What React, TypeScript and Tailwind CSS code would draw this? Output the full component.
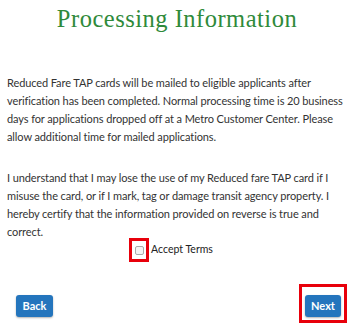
const App = () => {
  return (
    <div className="w-[350px] h-[325px] bg-white flex flex-col font-['Lato',sans-serif] text-[#333]">
      <h1 className="mt-[4px] text-center text-[24.5px] leading-[30px] text-[#2f8a3a] font-['Liberation_Serif',serif] tracking-[0.5px] pl-[4px]">
        Processing Information
      </h1>
      <p className="mt-[40px] pl-[7px] pr-[3px] text-[11px] leading-[18px] tracking-[-0.1px]">
        Reduced Fare TAP cards will be mailed to eligible applicants after
        verification has been completed. Normal processing time is 20 business
        days for applications dropped off at a Metro Customer Center. Please
        allow additional time for mailed applications.
      </p>
      <p className="mt-[23px] pl-[7px] pr-[3px] text-[11px] leading-[18px] tracking-[-0.1px]">
        I understand that I may lose the use of my Reduced fare TAP card if I
        misuse the card, or if I mark, tag or damage transit agency property. I
        hereby certify that the information provided on reverse is true and
        correct.
      </p>
      <div className="mt-[-3px] flex justify-center items-center pr-[8px]">
        <div className="border-[3px] border-[#e8000b] w-[20px] h-[24px] flex items-center justify-center">
          <div className="w-[9px] h-[9px] rounded-[2px] border border-[#aaa] bg-[#f4f4f4]" />
        </div>
        <span className="ml-[2px] text-[10.5px] text-[#222]">Accept Terms</span>
      </div>
      <div className="mt-[22px] flex justify-between items-end pl-[16px] pr-[3px]">
        <button className="mb-[6px] w-[37px] h-[22px] rounded-[3px] bg-[#2475bd] text-white text-[11px] font-bold shadow-[0_1px_2px_rgba(0,0,0,0.3)]">
          Back
        </button>
        <div className="border-[3px] border-[#e8000b] px-[3px] pt-[5px] pb-[3px]">
          <button className="w-[36px] h-[22px] rounded-[3px] bg-[#2475bd] text-white text-[11px] font-bold shadow-[0_1px_2px_rgba(0,0,0,0.3)]">
            Next
          </button>
        </div>
      </div>
    </div>
  );
};

export default App;
